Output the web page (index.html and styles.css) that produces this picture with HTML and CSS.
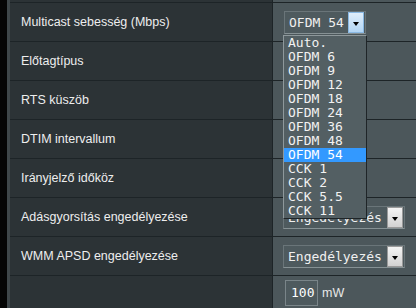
FILE: index.html
```html
<!DOCTYPE html>
<html>
<head>
<meta charset="utf-8">
<link rel="stylesheet" href="styles.css">
</head>
<body>
<div class="page">
  <div class="edge-black"></div>
  <div class="edge-grey"></div>
  <div class="table">
    <div class="row stub"><div class="label"></div><div class="value"></div></div>

    <div class="row">
      <div class="label">Multicast sebesség (Mbps)</div>
      <div class="value">
        <div class="select narrow open">
          <span class="sel-text">OFDM 54</span>
          <span class="btn blue"><i class="tri"></i></span>
          <ul class="list">
            <li>Auto.</li>
            <li>OFDM 6</li>
            <li>OFDM 9</li>
            <li>OFDM 12</li>
            <li>OFDM 18</li>
            <li>OFDM 24</li>
            <li>OFDM 36</li>
            <li>OFDM 48</li>
            <li class="hl">OFDM 54</li>
            <li>CCK 1</li>
            <li>CCK 2</li>
            <li>CCK 5.5</li>
            <li>CCK 11</li>
          </ul>
        </div>
      </div>
    </div>

    <div class="row"><div class="label">Előtagtípus</div><div class="value"></div></div>
    <div class="row"><div class="label">RTS küszöb</div><div class="value"></div></div>
    <div class="row"><div class="label">DTIM intervallum</div><div class="value"></div></div>
    <div class="row"><div class="label">Irányjelző időköz</div><div class="value"></div></div>

    <div class="row">
      <div class="label">Adásgyorsítás engedélyezése</div>
      <div class="value">
        <div class="select wide">
          <span class="sel-text">Engedélyezés</span>
          <span class="btn"><i class="tri"></i></span>
        </div>
      </div>
    </div>

    <div class="row">
      <div class="label">WMM APSD engedélyezése</div>
      <div class="value">
        <div class="select wide">
          <span class="sel-text">Engedélyezés</span>
          <span class="btn"><i class="tri"></i></span>
        </div>
      </div>
    </div>

    <div class="row last">
      <div class="label"></div>
      <div class="value top">
        <span class="input">100</span><span class="unit">mW</span>
      </div>
    </div>
  </div>
</div>
</body>
</html>
```

FILE: styles.css
```css
html, body {
  margin: 0;
  padding: 0;
  background: #000;
  overflow: hidden;
}
.page {
  display: flex;
  width: 416px;
  height: 308px;
  overflow: hidden;
}
.edge-black {
  width: 7px;
  background: #050505;
}
.edge-grey {
  width: 3px;
  background: #3f474a;
}
.table {
  flex: 1;
  display: flex;
  flex-direction: column;
}
.row {
  display: grid;
  grid-template-columns: 263px 1fr;
  height: 38px;
  flex-shrink: 0;
  border-bottom: 1px solid #1d2427;
}
.row.stub {
  height: 2px;
}
.row.last {
  height: 60px;
  border-bottom: none;
}
.label {
  background: #2c3336;
  border-right: 1px solid #1d2427;
  color: #eeeeee;
  font-family: "Liberation Sans", Arial, sans-serif;
  font-size: 12.5px;
  display: flex;
  align-items: center;
  padding-left: 11px;
}
.value {
  background: #4c575b;
  display: flex;
  align-items: center;
  padding-left: 11px;
  position: relative;
}
.value.top {
  align-items: flex-start;
  padding-top: 4px;
}
.select {
  position: relative;
  box-sizing: border-box;
  height: 23px;
  border: 1px solid #6a7579;
  border-bottom-color: #869194;
  background: #4e5a5e;
  display: flex;
  align-items: center;
  font-family: "DejaVu Sans Mono", monospace;
  font-size: 13px;
  color: #f0f0f0;
  margin-top: 1px;
}
.select.narrow { width: 82px; }
.select.wide { width: 122px; margin-left: -1px; }
.sel-text {
  padding-left: 4px;
  flex: 1;
  white-space: nowrap;
}
.btn {
  box-sizing: border-box;
  width: 16px;
  height: 21px;
  margin-right: 1px;
  border: 1px solid #9a9a9a;
  background: linear-gradient(#f4f4f4, #d2d2d2);
  display: flex;
  align-items: center;
  justify-content: center;
}
.btn.blue {
  border-color: #8ab9e4;
  background: linear-gradient(#e0eefb, #b3d6f5);
}
.tri {
  width: 0;
  height: 0;
  border-left: 3.5px solid transparent;
  border-right: 3.5px solid transparent;
  border-top: 4px solid #000;
  margin-top: 2px;
}
.list {
  position: absolute;
  left: -2px;
  top: 23px;
  width: 84px;
  box-sizing: border-box;
  margin: 0;
  padding: 0;
  list-style: none;
  background: #535f63;
  border: 1px solid #8e989b;
  border-right-color: #1f2528;
  border-bottom-color: #1f2528;
  z-index: 5;
}
.list li {
  height: 14px;
  line-height: 14px;
  padding-left: 4px;
  color: #f2f2f2;
  white-space: nowrap;
}
.list li.hl {
  background: #3399ff;
  color: #ffffff;
}
.input {
  box-sizing: border-box;
  display: inline-block;
  width: 33px;
  height: 26px;
  line-height: 24px;
  border: 1px solid #7a8589;
  background: #4e5a5e;
  color: #ffffff;
  font-family: "DejaVu Sans Mono", monospace;
  font-size: 13px;
  padding-left: 5px;
  margin-left: 1px;
}
.unit {
  color: #e8e8e8;
  font-family: "Liberation Sans", Arial, sans-serif;
  font-size: 12.5px;
  margin-left: 4px;
  line-height: 26px;
}
```
